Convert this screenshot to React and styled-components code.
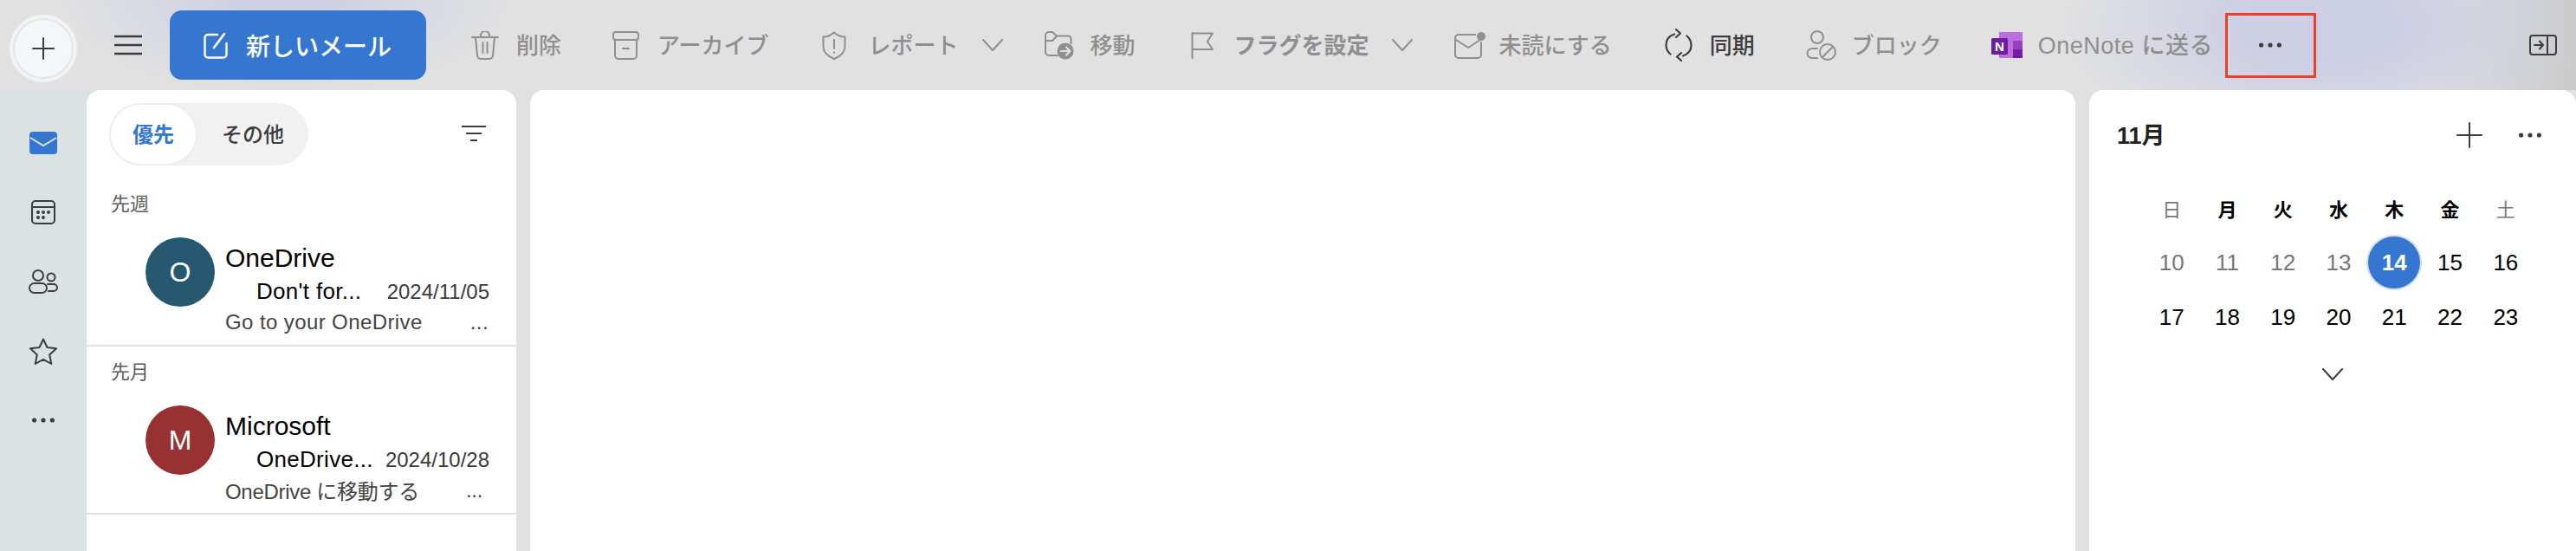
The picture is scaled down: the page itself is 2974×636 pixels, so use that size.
import React from 'react';
import styled, { createGlobalStyle } from 'styled-components';

const FONT = '"Liberation Sans", "Noto Sans CJK JP", sans-serif';
const BLUE = '#3577d0';
const DISABLED = '#8f8f8f';
const DARK = '#3d3d3d';

const GlobalStyle = createGlobalStyle`
  html, body {
    margin: 0;
    padding: 0;
    height: 100%;
    font-family: ${FONT};
    background: #e1e1e1;
  }
  * { box-sizing: border-box; }
`;

const Page = styled.div`
  width: 2974px;
  height: 636px;
  overflow: hidden;
  display: flex;
  flex-direction: column;
  background:
    radial-gradient(ellipse 300px 150px at 2680px 30px, #cdcfe4 30%, rgba(205, 207, 228, 0) 100%),
    radial-gradient(ellipse 260px 110px at 330px 0, #cfd1e4 20%, rgba(207, 209, 228, 0) 100%),
    linear-gradient(to right, #e1e1e1 2800px, #cbcbcb 2974px),
    linear-gradient(to right, #dae2e4 100px, #e1e1e1 300px);
  background-size: auto, auto, 100% 104px, auto;
  background-repeat: no-repeat;
`;

const Toolbar = styled.header`
  height: 104px;
  flex: none;
  display: flex;
  align-items: center;
`;

const NewCircle = styled.button`
  width: 78px;
  height: 78px;
  margin: 8px 0 0 11px;
  padding: 0;
  border-radius: 50%;
  border: 4px solid #f2f3f5;
  outline: 2px solid #e4e5e6;
  outline-offset: -6px;
  background: #f4f6f8;
  display: flex;
  align-items: center;
  justify-content: center;
  color: ${DARK};
`;

const IconButton = styled.button`
  border: 0;
  padding: 0;
  background: none;
  display: flex;
  align-items: center;
  justify-content: center;
  margin-left: ${(p) => p.$ml || 0}px;
  color: ${(p) => p.$color || DARK};
`;

const ComposeButton = styled.button`
  width: 296px;
  height: 80px;
  margin-left: 32px;
  padding: 0 0 0 39px;
  border: 0;
  border-radius: 14px;
  background: ${BLUE};
  color: #fff;
  display: flex;
  align-items: center;
  gap: 20px;
  font-family: ${FONT};
  font-size: 28px;
  font-weight: 500;
  white-space: nowrap;
`;

const ToolButton = styled.div`
  display: flex;
  align-items: center;
  gap: ${(p) => p.$gap}px;
  margin-left: ${(p) => p.$ml}px;
  color: ${(p) => (p.$active ? DARK : DISABLED)};
  white-space: nowrap;
`;

const ToolLabel = styled.span`
  font-size: ${(p) => p.$size || 26}px;
  font-weight: ${(p) => p.$weight || 500};
  letter-spacing: ${(p) => p.$track || 0}px;
  margin-top: -3px;
`;

const OverflowBox = styled.div`
  width: 105px;
  height: 75px;
  margin-left: ${(p) => p.$ml}px;
  border: 3px solid #e8432a;
  display: flex;
  align-items: center;
  justify-content: center;
  color: ${DARK};
`;

const ToolbarEnd = styled.div`
  margin: 0 22px 0 auto;
  display: flex;
  color: ${DARK};
`;

const Body = styled.div`
  flex: 1;
  min-height: 0;
  display: flex;
`;

const Rail = styled.nav`
  width: 100px;
  flex: none;
  padding-top: 21px;
  display: flex;
  flex-direction: column;
  align-items: center;
`;

const RailItem = styled.div`
  height: 80px;
  display: flex;
  align-items: center;
  justify-content: center;
  color: ${(p) => p.$color || DARK};
`;

const Panel = styled.section`
  background: #fff;
  border-radius: 16px 16px 0 0;
  flex: ${(p) => (p.$width ? 'none' : 1)};
  width: ${(p) => (p.$width ? `${p.$width}px` : 'auto')};
  margin-left: ${(p) => p.$ml || 0}px;
`;

const ListHeader = styled.div`
  height: 102px;
  padding: 15px 35px 0 26px;
  display: flex;
  align-items: flex-start;
  justify-content: space-between;
`;

const Tabs = styled.div`
  width: 230px;
  height: 72px;
  border-radius: 36px;
  background: #f1f1f1;
  display: flex;
  align-items: stretch;
`;

const Tab = styled.div`
  width: ${(p) => p.$w}px;
  padding-bottom: 3px;
  display: flex;
  align-items: center;
  justify-content: center;
  border-radius: 36px;
  font-size: 24px;
  font-weight: ${(p) => (p.$active ? 700 : 500)};
  color: ${(p) => (p.$active ? BLUE : DARK)};
  background: ${(p) => (p.$active ? '#fff' : 'none')};
  border: ${(p) => (p.$active ? '2px solid #eeeeee' : '0')};
`;

const FilterWrap = styled.div`
  margin-top: 26px;
  color: ${DARK};
`;

const Section = styled.div`
  height: 194px;
  border-bottom: 2px solid #e1e1e1;
`;

const SectionLabel = styled.div`
  height: 60px;
  line-height: 60px;
  padding-left: 28px;
  font-size: 22px;
  color: #5c5c5c;
`;

const MailRow = styled.div`
  display: flex;
  padding: 0 31px 0 68px;
`;

const Avatar = styled.div`
  width: 80px;
  height: 80px;
  flex: none;
  margin-top: 8px;
  border-radius: 50%;
  background: ${(p) => p.$bg};
  color: #fff;
  font-size: 32px;
  display: flex;
  align-items: center;
  justify-content: center;
`;

const MailText = styled.div`
  flex: 1;
  min-width: 0;
  margin: 12px 0 0 12px;
  color: #000;
`;

const Sender = styled.div`
  height: 40px;
  line-height: 40px;
  font-size: 30px;
`;

const SubjectLine = styled.div`
  height: 37px;
  display: flex;
  align-items: center;
  justify-content: space-between;
  padding-left: 36px;
`;

const Subject = styled.span`
  font-size: 26px;
  letter-spacing: 0.3px;
`;

const MailDate = styled.span`
  font-size: 24px;
  color: #3a3a3a;
`;

const PreviewLine = styled.div`
  height: 33px;
  display: flex;
  align-items: center;
  justify-content: space-between;
  padding-right: ${(p) => p.$pr}px;
  font-size: 24px;
  letter-spacing: ${(p) => p.$track}px;
  color: #444;
`;

const CalendarHead = styled.div`
  height: 104px;
  padding: 0 40px 0 32px;
  display: flex;
  align-items: center;
`;

const MonthTitle = styled.div`
  font-size: 27px;
  font-weight: 700;
  color: #222;
  margin: 0 auto 0 0;
  padding-bottom: 3px;
`;

const CalendarGrid = styled.div`
  width: 450px;
  margin-left: 63px;
  display: grid;
  grid-template-columns: repeat(7, 1fr);
  grid-auto-rows: 63.5px;
`;

const WeekDay = styled.div`
  display: flex;
  align-items: center;
  justify-content: center;
  font-size: 22px;
  font-weight: ${(p) => (p.$muted ? 400 : 700)};
  color: ${(p) => (p.$muted ? '#777' : '#000')};
`;

const DayCell = styled.div`
  display: flex;
  align-items: center;
  justify-content: center;
  font-size: 26px;
  color: ${(p) => (p.$muted ? '#777' : '#000')};
`;

const TodayDot = styled.div`
  width: 60px;
  height: 60px;
  border-radius: 50%;
  background: ${BLUE};
  box-shadow: 0 0 0 2px #d3e0f3;
  color: #fff;
  font-size: 26px;
  font-weight: 700;
  display: flex;
  align-items: center;
  justify-content: center;
`;

const MoreRow = styled.div`
  margin-top: 26px;
  display: flex;
  justify-content: center;
  color: ${DARK};
`;

const Svg = ({ w, h, children, sw = 2 }) => (
  <svg width={w} height={h} viewBox={`0 0 ${w} ${h}`} fill="none" stroke="currentColor" strokeWidth={sw} strokeLinecap="round" strokeLinejoin="round">
    {children}
  </svg>
);

const Plus = ({ s = 26 }) => (
  <Svg w={s} h={s}><path d={`M${s / 2} 1V${s - 1}M1 ${s / 2}H${s - 1}`} /></Svg>
);

const Dots = ({ w = 26, r = 2.6, fill = 'currentColor' }) => (
  <svg width={w} height={8} viewBox={`0 0 ${w} 8`} fill={fill}>
    <circle cx={r} cy="4" r={r} />
    <circle cx={w / 2} cy="4" r={r} />
    <circle cx={w - r} cy="4" r={r} />
  </svg>
);

const Chevron = ({ w = 24, h = 14 }) => (
  <Svg w={w} h={h}><path d={`M1 1L${w / 2} ${h - 1}L${w - 1} 1`} /></Svg>
);

const Hamburger = () => (
  <svg width="32" height="24" viewBox="0 0 32 24" stroke="currentColor" strokeWidth="2.4"><path d="M0 2H32M0 12H32M0 22H32" /></svg>
);

const ComposeIcon = () => (
  <Svg w={29} h={31} sw={2.4}>
    <path d="M16 3H5a3.500 3.500 0 0 0-3.500 3.500V26a3.500 3.500 0 0 0 3.500 3.500h18a3.500 3.500 0 0 0 3.500-3.500V13" />
    <path d="M12 18L24 2" strokeWidth="2.6" />
  </Svg>
);

const TrashIcon = () => (
  <Svg w={32} h={33}>
    <path d="M1 7H31M11 7V5a5 5 0 0 1 10 0V7" />
    <path d="M5 7L7 28a4 4 0 0 0 4 4h10a4 4 0 0 0 4-4L27 7" />
    <path d="M13.500 13V25M18.500 13V25" />
  </Svg>
);

const ArchiveIcon = () => (
  <Svg w={31} h={33}>
    <rect x="1" y="1" width="29" height="9" rx="3" />
    <path d="M3 10V28a4 4 0 0 0 4 4h17a4 4 0 0 0 4-4V10M12 20H19" />
  </Svg>
);

const ShieldIcon = () => (
  <Svg w={28} h={33}>
    <path d="M14 1.500C10 5 6 6.500 1.500 6.500V18C1.500 25 8 29.500 14 32C20 29.500 26.500 25 26.500 18V6.500C22 6.500 18 5 14 1.500Z" />
    <path d="M14 10V20M14 24.500V25" />
  </Svg>
);

const MoveIcon = () => (
  <svg width="34" height="33" viewBox="0 0 34 33" fill="none" stroke="currentColor" strokeWidth="2" strokeLinecap="round" strokeLinejoin="round">
    <path d="M15 28H5a4 4 0 0 1-4-4V5a4 4 0 0 1 4-4h4l5 4.500H27a3.500 3.500 0 0 1 3.500 3.500V14" />
    <path d="M1 11L9 11L14 5.500" />
    <circle cx="24" cy="23" r="9.500" fill="currentColor" stroke="none" />
    <path d="M19 23H29M25 18.500L29.500 23L25 27.500" stroke="#e1e1e1" strokeWidth="2.2" />
  </svg>
);

const FlagIcon = () => (
  <Svg w={27} h={31}>
    <path d="M1.500 1V30M1.500 1.500H25L19 11L25 20H1.500" />
  </Svg>
);

const UnreadIcon = () => (
  <svg width="37" height="31" viewBox="0 0 37 31" fill="none" stroke="currentColor" strokeWidth="2" strokeLinecap="round" strokeLinejoin="round">
    <path d="M24 3H5a4 4 0 0 0-4 4V26a4 4 0 0 0 4 4H27a4 4 0 0 0 4-4V12" />
    <path d="M2 9L16 18L30 9" />
    <circle cx="31" cy="5" r="5" fill="currentColor" stroke="none" />
  </svg>
);

const SyncIcon = () => (
  <Svg w={32} h={38} sw={2.2}>
    <path d="M11 6.500C5 8.500 1.500 13 1.500 19C1.500 23.500 3.500 27 6.500 29.500" />
    <path d="M21 31.500C27 29.500 30.500 25 30.500 19C30.500 14.500 28.500 11 25.500 8.500" />
    <path d="M13 1L18 5.500L13 10M19 28L14 32.500L19 37" />
  </Svg>
);

const BlockIcon = () => (
  <Svg w={35} h={35}>
    <circle cx="13" cy="8" r="7" />
    <path d="M13 21H7a5.500 5.500 0 0 0 0 11H13" />
    <circle cx="25" cy="25" r="9" />
    <path d="M19 31L31 19" />
  </Svg>
);

const OneNoteLogo = () => (
  <svg width="36" height="30" viewBox="0 0 36 30">
    <rect x="9" width="27" height="30" rx="1" fill="#ba6fe0" />
    <rect x="25" y="10" width="11" height="10" fill="#9a3fc4" />
    <rect x="25" y="20" width="11" height="10" fill="#7719aa" />
    <rect y="7" width="19" height="19" rx="1.500" fill="#6d1e9e" />
    <text x="9.500" y="22" textAnchor="middle" fontSize="15" fontWeight="700" fill="#fff" fontFamily="Liberation Sans, sans-serif">N</text>
  </svg>
);

const PanelIcon = () => (
  <Svg w={32} h={24}>
    <rect x="1" y="1" width="30" height="22" rx="3" />
    <path d="M21 1V23M6 12H16M12 7.500L16 12L12 16.500" />
  </Svg>
);

const FilterIcon = () => (
  <svg width="28" height="18" viewBox="0 0 28 18" stroke="currentColor" strokeWidth="2"><path d="M0 1H28M5 9H23M10 17H18" /></svg>
);

const MailSolid = () => (
  <svg width="32" height="26" viewBox="0 0 32 26">
    <rect width="32" height="26" rx="4" fill={BLUE} />
    <path d="M1 7L16 16L31 7" fill="none" stroke="#dae2e4" strokeWidth="2" />
  </svg>
);

const CalendarIcon = () => (
  <svg width="28" height="28" viewBox="0 0 28 28" fill="none" stroke="currentColor" strokeWidth="2">
    <rect x="1" y="1" width="26" height="26" rx="4" />
    <path d="M1 8H27" />
    <g fill="currentColor" stroke="none">
      <circle cx="8" cy="14" r="2" /><circle cx="14" cy="14" r="2" /><circle cx="20" cy="14" r="2" />
      <circle cx="8" cy="20" r="2" /><circle cx="14" cy="20" r="2" />
    </g>
  </svg>
);

const PeopleIcon = () => (
  <Svg w={34} h={28}>
    <circle cx="11" cy="7" r="6" />
    <circle cx="26" cy="9" r="4.500" />
    <rect x="1" y="16" width="20" height="11" rx="5.500" />
    <path d="M22 17H29a4 4 0 0 1 0 8H23" />
  </Svg>
);

const StarIcon = () => (
  <Svg w={32} h={31}>
    <path d="M16 1.500L20.500 11L31 12.300L23.200 19.500L25.300 30L16 24.800L6.700 30L8.800 19.500L1 12.300L11.500 11Z" />
  </Svg>
);

const weekDays = ['日', '月', '火', '水', '木', '金', '土'];
const mutedDays = [10, 11, 12, 13];
const otherDays = [15, 16, 17, 18, 19, 20, 21, 22, 23];

const App = () => (
  <Page>
    <GlobalStyle />
    <Toolbar>
      <NewCircle><Plus s={26} /></NewCircle>
      <IconButton $ml={43}><Hamburger /></IconButton>
      <ComposeButton><ComposeIcon />新しいメール</ComposeButton>
      <ToolButton $ml={52} $gap={20}><TrashIcon /><ToolLabel>削除</ToolLabel></ToolButton>
      <ToolButton $ml={59} $gap={21}><ArchiveIcon /><ToolLabel>アーカイブ</ToolLabel></ToolButton>
      <ToolButton $ml={62} $gap={25}><ShieldIcon /><ToolLabel>レポート</ToolLabel></ToolButton>
      <IconButton $ml={28} $color={DISABLED}><Chevron /></IconButton>
      <ToolButton $ml={48} $gap={18}><MoveIcon /><ToolLabel>移動</ToolLabel></ToolButton>
      <ToolButton $ml={64} $gap={23}><FlagIcon /><ToolLabel $weight={700}>フラグを設定</ToolLabel></ToolButton>
      <IconButton $ml={26} $color={DISABLED}><Chevron /></IconButton>
      <ToolButton $ml={48} $gap={15}><UnreadIcon /><ToolLabel>未読にする</ToolLabel></ToolButton>
      <ToolButton $ml={61} $gap={20} $active><SyncIcon /><ToolLabel>同期</ToolLabel></ToolButton>
      <ToolButton $ml={59} $gap={18}><BlockIcon /><ToolLabel>ブロック</ToolLabel></ToolButton>
      <ToolButton $ml={57} $gap={18}><OneNoteLogo /><ToolLabel $size={27} $track={0.5}>OneNote に送る</ToolLabel></ToolButton>
      <OverflowBox $ml={14}><Dots /></OverflowBox>
      <ToolbarEnd><PanelIcon /></ToolbarEnd>
    </Toolbar>
    <Body>
      <Rail>
        <RailItem><MailSolid /></RailItem>
        <RailItem><CalendarIcon /></RailItem>
        <RailItem><PeopleIcon /></RailItem>
        <RailItem><StarIcon /></RailItem>
        <RailItem><Dots /></RailItem>
      </Rail>
      <Panel $width={496}>
        <ListHeader>
          <Tabs>
            <Tab $w={102} $active>優先</Tab>
            <Tab $w={128}>その他</Tab>
          </Tabs>
          <FilterWrap><FilterIcon /></FilterWrap>
        </ListHeader>
        <Section>
          <SectionLabel>先週</SectionLabel>
          <MailRow>
            <Avatar $bg="#26596f">O</Avatar>
            <MailText>
              <Sender>OneDrive</Sender>
              <SubjectLine><Subject>Don't for...</Subject><MailDate>2024/11/05</MailDate></SubjectLine>
              <PreviewLine $pr={1} $track={0.4}><span>Go to your OneDrive</span><span>...</span></PreviewLine>
            </MailText>
          </MailRow>
        </Section>
        <Section>
          <SectionLabel>先月</SectionLabel>
          <MailRow>
            <Avatar $bg="#983131">M</Avatar>
            <MailText>
              <Sender>Microsoft</Sender>
              <SubjectLine><Subject>OneDrive...</Subject><MailDate>2024/10/28</MailDate></SubjectLine>
              <PreviewLine $pr={8} $track={-0.3}><span>OneDrive に移動する</span><span>...</span></PreviewLine>
            </MailText>
          </MailRow>
        </Section>
      </Panel>
      <Panel $ml={16} />
      <Panel $ml={16} $width={562}>
        <CalendarHead>
          <MonthTitle>11月</MonthTitle>
          <IconButton><Plus s={30} /></IconButton>
          <IconButton $ml={42}><Dots /></IconButton>
        </CalendarHead>
        <CalendarGrid>
          {weekDays.map((d, i) => (
            <WeekDay key={d} $muted={i === 0 || i === 6}>{d}</WeekDay>
          ))}
          {mutedDays.map((d) => <DayCell key={d} $muted>{d}</DayCell>)}
          <DayCell><TodayDot>14</TodayDot></DayCell>
          {otherDays.map((d) => <DayCell key={d}>{d}</DayCell>)}
        </CalendarGrid>
        <MoreRow><Chevron w={24} h={14} /></MoreRow>
      </Panel>
    </Body>
  </Page>
);

export default App;
